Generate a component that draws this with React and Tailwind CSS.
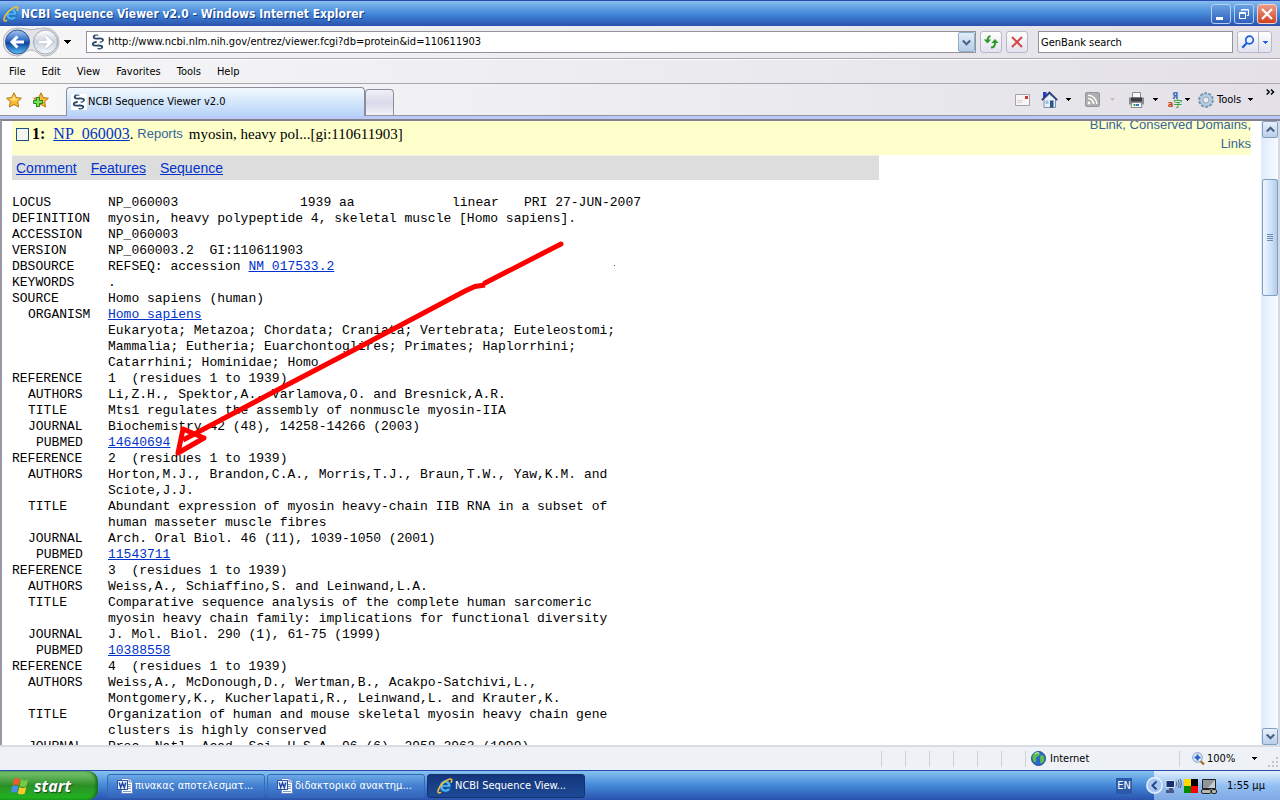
import React from 'react';

const LINK = 'text-[#0033cc] underline';

const menuItems = ['File', 'Edit', 'View', 'Favorites', 'Tools', 'Help'];

const record = [
  { label: 'DEFINITION', lines: ['myosin, heavy polypeptide 4, skeletal muscle [Homo sapiens].'] },
  { label: 'ACCESSION', lines: ['NP_060003'] },
  { label: 'VERSION', lines: ['NP_060003.2  GI:110611903'] },
  { label: 'DBSOURCE', lines: ['REFSEQ: accession '], link: 'NM_017533.2' },
  { label: 'KEYWORDS', lines: ['.'] },
  { label: 'SOURCE', lines: ['Homo sapiens (human)'] },
  { label: 'ORGANISM', indent: 'pl-4', lines: [''], link: 'Homo sapiens' },
  {
    label: '',
    lines: [
      'Eukaryota; Metazoa; Chordata; Craniata; Vertebrata; Euteleostomi;',
      'Mammalia; Eutheria; Euarchontoglires; Primates; Haplorrhini;',
      'Catarrhini; Hominidae; Homo.',
    ],
  },
];

const references = [
  {
    authors: ['Li,Z.H., Spektor,A., Varlamova,O. and Bresnick,A.R.'],
    title: ['Mts1 regulates the assembly of nonmuscle myosin-IIA'],
    journal: 'Biochemistry 42 (48), 14258-14266 (2003)',
    pubmed: '14640694',
  },
  {
    authors: ['Horton,M.J., Brandon,C.A., Morris,T.J., Braun,T.W., Yaw,K.M. and', 'Sciote,J.J.'],
    title: ['Abundant expression of myosin heavy-chain IIB RNA in a subset of', 'human masseter muscle fibres'],
    journal: 'Arch. Oral Biol. 46 (11), 1039-1050 (2001)',
    pubmed: '11543711',
  },
  {
    authors: ['Weiss,A., Schiaffino,S. and Leinwand,L.A.'],
    title: ['Comparative sequence analysis of the complete human sarcomeric', 'myosin heavy chain family: implications for functional diversity'],
    journal: 'J. Mol. Biol. 290 (1), 61-75 (1999)',
    pubmed: '10388558',
  },
  {
    authors: ['Weiss,A., McDonough,D., Wertman,B., Acakpo-Satchivi,L.,', 'Montgomery,K., Kucherlapati,R., Leinwand,L. and Krauter,K.'],
    title: ['Organization of human and mouse skeletal myosin heavy chain gene', 'clusters is highly conserved'],
    journal: 'Proc. Natl. Acad. Sci. U.S.A. 96 (6), 2958-2963 (1999)',
    pubmed: '10077619',
  },
];

const IeIcon = () => (
  <svg width="16" height="16" viewBox="0 0 16 16" fill="none" className="shrink-0">
    <path d="M8.300 2.500C5 2.500 2.900 5 2.900 8.200c0 3.400 2.200 5.700 5.500 5.700 2.500 0 4.300-1.200 5-3.400h-2.900c-.4.700-1.100 1-2 1-1.500 0-2.500-.8-2.600-2.400h7.800C13.900 5.200 12 2.500 8.300 2.500ZM6 6.900c.3-1.300 1.100-1.900 2.300-1.900s2 .6 2.200 1.900Z" fill="#4fb8f5" stroke="#1766b8" strokeWidth=".6" />
    <path d="M3.400 14.600C1.500 15.400.5 14.600 1.200 12 2.300 8 7.500 2.700 12 1.300c2.600-.8 3.300.6 2.300 2.800" stroke="#f2bd35" strokeWidth="1.600" strokeLinecap="round" />
  </svg>
);

const NcbiIcon = () => (
  <span className="flex size-4 shrink-0 items-center justify-center bg-white">
    <svg width="16" height="16" viewBox="0 0 16 16" fill="none" stroke="#2c4668" strokeLinecap="round">
      <path d="M4.500 1.500C2.500 3.500 4 4.800 7 4.600 10 4.400 12.500 3.800 13 6" strokeWidth="1.800" />
      <path d="M8 1.200C6.500.8 5.500.9 4.500 1.500M13 6c0 1.500-1.500 2-3 2.200" strokeWidth="1.100" />
      <path d="M6 8c-2 .3-3.500 1-3.200 2.600.5 1.400 3 1 5.200.9 3-.1 4.800.3 4.200 1.900" strokeWidth="1.800" />
      <path d="M12.200 13.400C11.500 14.800 9.500 15 8 14.700" strokeWidth="1.200" />
    </svg>
  </span>
);

const Triangle = ({ color = '#000' }) => (
  <svg width="5" height="3" viewBox="0 0 5 3" shapeRendering="crispEdges" className="shrink-0">
    <path d="M0 0h5v1H4v1H3v1H2V2H1V1H0Z" fill={color} />
  </svg>
);

const Chevron = ({ up }) => (
  <svg width="9" height="7" viewBox="0 0 9 7" fill="none" stroke="#4d6185" strokeWidth="2.200">
    <path d={up ? 'M.8 5.500 4.500 1.800 8.200 5.500' : 'M.8 1.500 4.500 5.200 8.200 1.500'} />
  </svg>
);

const WordIcon = () => (
  <svg width="16" height="16" viewBox="0 0 16 16" className="shrink-0">
    <path d="M4.500.5h8L15.500 3.500v12h-11Z" fill="#fff" stroke="#6a86bd" />
    <path d="M12 .5v3.500h3.500" fill="#d5e0f5" stroke="#6a86bd" />
    <path d="M11 6.500h3M11 8.500h3M6 13.500h8M11 10.500h3" stroke="#7d9ad0" />
    <rect x=".5" y="2.500" width="10" height="9" fill="#e8effc" stroke="#2a54a8" />
    <path d="m2.200 4.500 1.500 5 1.800-4.500 1.800 4.500 1.500-5" fill="none" stroke="#1e459b" strokeWidth="1.500" />
  </svg>
);

const TitleBar = () => (
  <header className="flex h-[26px] shrink-0 items-center border-t border-[#2b4aab] bg-linear-to-b from-[#86bdf0] via-[#4488d8] to-[#2a52ae] pr-[3px] pl-[3px]">
    <IeIcon />
    <h1 className="ml-[2px] flex-1 truncate font-['DejaVu_Sans_Condensed','Liberation_Sans',sans-serif] text-[12px] leading-4 font-bold text-white [text-shadow:1px_1px_0_#143a8c]">
      NCBI Sequence Viewer v2.0 - Windows Internet Explorer
    </h1>
    <div className="flex gap-[3px]">
      <button aria-label="Minimize" className="flex size-5 items-center justify-center rounded-[3px] border border-[#b5d0f2] bg-linear-to-b from-[#6ba1e2] to-[#2e5fbb]">
        <svg width="14" height="14" viewBox="0 0 14 14"><path d="M2 10h7v3H2Z" fill="#fff" /></svg>
      </button>
      <button aria-label="Restore" className="flex size-5 items-center justify-center rounded-[3px] border border-[#b5d0f2] bg-linear-to-b from-[#6ba1e2] to-[#2e5fbb]">
        <svg width="14" height="14" viewBox="0 0 14 14" fill="none" stroke="#fff">
          <path d="M4.500 4V2.500h7v6H10M4.500 3h7" />
          <path d="M2.500 5.500h6v6h-6ZM2.500 6.500h6" />
        </svg>
      </button>
      <button aria-label="Close" className="flex size-5 items-center justify-center rounded-[3px] border border-[#f2d0cc] bg-linear-to-b from-[#ec9a86] to-[#cf3f1c]">
        <svg width="14" height="14" viewBox="0 0 14 14"><path d="m2 2 10 10M12 2 2 12" stroke="#fff" strokeWidth="2.200" /></svg>
      </button>
    </div>
  </header>
);

const NavButtons = () => (
  <svg width="58" height="30" viewBox="0 0 58 30" fill="none">
    <defs>
      <linearGradient id="back" x1="0" y1="0" x2="0" y2="1">
        <stop offset="0" stopColor="#a8c8f0" />
        <stop offset=".4" stopColor="#3a72cc" />
        <stop offset=".55" stopColor="#0b479f" />
        <stop offset="1" stopColor="#5fc0fa" />
      </linearGradient>
      <linearGradient id="fwd" x1="0" y1="0" x2="0" y2="1">
        <stop offset="0" stopColor="#fff" />
        <stop offset=".5" stopColor="#ccd4df" />
        <stop offset="1" stopColor="#f4f9ff" />
      </linearGradient>
    </defs>
    <path d="M14 1c5 0 9 1.500 14 1.500S37 1 42 1a14 14 0 0 1 0 28c-6 0-8-6-14-6s-8 6-14 6a14 14 0 0 1 0-28Z" fill="#e2e3e7" stroke="#b2b4bb" />
    <circle cx="14.500" cy="15" r="12" fill="url(#back)" stroke="#33548c" />
    <circle cx="42.500" cy="15" r="12" fill="url(#fwd)" stroke="#a0a8b5" />
    <path d="M21 15H9.500M14.500 9.500 9 15l5.500 5.500" stroke="#fff" strokeWidth="3" />
    <path d="M36 15h11.500M42.500 9.500 48 15l-5.500 5.500" stroke="#a9b2bf" strokeWidth="4" />
    <path d="M36 15h11.500M42.500 9.500 48 15l-5.500 5.500" stroke="#fff" strokeWidth="3" />
  </svg>
);

const AddressRow = () => (
  <div className="flex h-[33px] shrink-0 items-center border-b border-[#a9a7b0] bg-linear-to-r from-[#f6f6f7] to-[#e3e1e7] pr-2 pl-[3px]">
    <button aria-label="Back and forward"><NavButtons /></button>
    <button aria-label="Recent pages" className="flex w-[25px] justify-center pr-3">
      <svg width="7" height="4" viewBox="0 0 7 4" shapeRendering="crispEdges"><path d="M0 0h7L3.500 4Z" /></svg>
    </button>
    <div className="flex h-[22px] flex-1 items-center border border-[#93929d] bg-white pl-[3px]">
      <NcbiIcon />
      <input
        aria-label="Address"
        defaultValue="http://www.ncbi.nlm.nih.gov/entrez/viewer.fcgi?db=protein&id=110611903"
        className="ml-[2px] min-w-0 flex-1 bg-transparent outline-none"
      />
      <button aria-label="Show addresses" className="flex h-5 w-[17px] items-center justify-center rounded-[2px] border border-[#8eadc8] bg-linear-to-b from-[#e2edf9] to-[#b4cde6]">
        <Chevron />
      </button>
    </div>
    <button aria-label="Refresh" className="ml-1 flex size-[22px] items-center justify-center rounded-[3px] border border-[#b9b8cb] bg-linear-to-b from-white to-[#e2e2ef]">
      <svg width="16" height="16" viewBox="0 0 16 16" fill="none" stroke="#2c9a28" strokeWidth="2">
        <path d="M7.500 2C5 2.500 4.500 4 4.500 7M8 13.500c3 0 4-1.500 4-4.500" />
        <path d="M.8 5.500h7.400L4.500 9.500ZM8.300 9h7.400L12 5Z" fill="#2c9a28" stroke="none" />
      </svg>
    </button>
    <button aria-label="Stop" className="ml-1 flex size-[22px] items-center justify-center rounded-[3px] border border-[#b9b8cb] bg-linear-to-b from-white to-[#e2e2ef]">
      <svg width="12" height="12" viewBox="0 0 12 12"><path d="m1 1 10 10M11 1 1 11" stroke="#d04a4a" strokeWidth="2" /></svg>
    </button>
    <input aria-label="Search" defaultValue="GenBank search" className="ml-[10px] h-[22px] w-[195px] border border-[#93929d] bg-white px-[2px] outline-none" />
    <div className="ml-1 flex h-[22px] rounded-[3px] border border-[#b9b8cb] bg-linear-to-b from-white to-[#e2e2ef]">
      <button aria-label="Search the web" className="flex w-[21px] items-center justify-center border-r border-[#b9b8cb]">
        <svg width="14" height="14" viewBox="0 0 14 14" fill="none" stroke="#1f5fe0">
          <circle cx="8.500" cy="5" r="3.800" strokeWidth="1.700" fill="#eef5ff" />
          <path d="m5.800 8-4.500 4.700" strokeWidth="2.300" />
        </svg>
      </button>
      <button aria-label="Search options" className="flex w-[12px] items-center justify-center"><Triangle color="#1f5fe0" /></button>
    </div>
  </div>
);

const MenuBar = () => (
  <nav className="flex h-[25px] shrink-0 items-center gap-4 border-t border-b border-t-white border-b-[#a9a7b0] bg-linear-to-r from-[#f6f6f7] to-[#e3e1e7] pl-[9px]">
    {menuItems.map((item) => (
      <button key={item}>{item}</button>
    ))}
  </nav>
);

const starPath = 'M8 .8 10.300 5.600 15.400 6.200 11.600 9.800 12.600 15 8 12.500 3.400 15 4.400 9.800.6 6.200 5.700 5.600Z';

const TabRow = () => (
  <div className="flex h-8 shrink-0 items-end border-b border-[#93929d] bg-linear-to-r from-[#f8f8f9] to-[#e3e1e7]">
    <div className="flex h-full w-[66px] items-center gap-[11px] pl-[6px]">
      <button aria-label="Favorites Center">
        <svg width="16" height="16" viewBox="0 0 16 16"><path d={starPath} fill="#fdb92c" stroke="#b57716" /><path d="M8 3 9.500 6.500 13 7 8 9 3 7 6.500 6.500Z" fill="#ffdf80" /></svg>
      </button>
      <button aria-label="Add to Favorites">
        <svg width="16" height="16" viewBox="0 0 16 16">
          <path d={starPath} fill="#fdb732" stroke="#b57716" />
          <path d="M3.500 5.500h3v3h3v3h-3v3h-3v-3h-3v-3h3Z" fill="#7ade55" stroke="#238420" />
        </svg>
      </button>
    </div>
    <button className="-mb-px flex h-[29px] w-[299px] items-center rounded-t-[4px] border border-b-0 border-[#8b8d9c] bg-linear-to-b from-[#f4f9fe] via-[#d3e6fb] to-[#b9d4f8] pl-[4px]">
      <NcbiIcon />
      <span className="ml-px">NCBI Sequence Viewer v2.0</span>
    </button>
    <button aria-label="New Tab" className="h-[26px] w-[29px] rounded-t-[4px] border border-b-0 border-[#8b8d9c] bg-linear-to-b from-[#f1f1f8] via-[#d9daea] to-[#f1f1f8]" />
    <div className="flex h-full flex-1 items-center justify-end">
      <button aria-label="Read mail" className="w-[26px]">
        <svg width="15" height="12" viewBox="0 0 15 12"><path d="M.5.5h14v11H.5Z" fill="#f7f5f5" stroke="#a7a3a5" /><path d="M2 6.500h6M2 8.500h5" stroke="#d5d1d4" /><path d="M10 2h3v3h-3Z" fill="#d33434" /></svg>
      </button>
      <button aria-label="Home" className="flex w-[44px] items-center gap-2">
        <svg width="17" height="17" viewBox="0 0 17 17">
          <path d="M2 1h3.500v6H2Z" fill="#2b3fc8" />
          <path d="M3 8 8.500 3 14.500 8v8.500H3Z" fill="#e9f0fa" stroke="#7b8ca8" />
          <path d="M.8 9.200 8.500 1.500l7.700 7.700" fill="none" stroke="#29427c" strokeWidth="1.800" />
          <path d="M9 9.500h3.500v7H9Z" fill="#24558c" />
          <path d="M4.500 9.500h3V13h-3Z" fill="#9cc0e0" />
        </svg>
        <Triangle />
      </button>
      <button aria-label="Feeds" className="flex w-[43px] items-center gap-[10px]">
        <svg width="15" height="15" viewBox="0 0 15 15" fill="none">
          <rect x=".5" y=".5" width="14" height="14" rx="1.500" fill="#aeaeae" stroke="#969696" />
          <circle cx="4" cy="11" r="1.400" fill="#fff" />
          <path d="M3 6.500A5.500 5.500 0 0 1 8.500 12M3 3.200A8.800 8.800 0 0 1 11.800 12" stroke="#fff" strokeWidth="1.500" />
        </svg>
        <Triangle color="#c6c5bc" />
      </button>
      <button aria-label="Print" className="flex w-[39px] items-center gap-2">
        <svg width="17" height="16" viewBox="0 0 17 16">
          <path d="M4.500.5h8v6h-8Z" fill="#fafafa" stroke="#8a8a8a" />
          <path d="M1 5.500h15v7H1Z" fill="#8a8b90" />
          <path d="M3 5.500h11v4H3Z" fill="#3c3d42" />
          <path d="M4 10.500h9l1 5H3Z" fill="#fff" stroke="#8a8a8a" />
          <path d="M5.500 12h2v2h-2Z" fill="#2d9a4f" />
          <path d="M8 12h3v2H8Z" fill="#2c79c8" />
        </svg>
        <Triangle />
      </button>
      <button aria-label="Language" className="flex w-[31px] items-center gap-[2px]">
        <span className="flex w-4 flex-col items-center text-[9px] leading-[8px] font-bold">
          <span className="text-[#4068c0]">Я</span>
          <span className="flex">
            <span className="text-[#c04018]">a</span>
            <span className="font-['Noto_Sans_CJK_JP',sans-serif] font-normal text-[#229a22]">字</span>
          </span>
        </span>
        <Triangle />
      </button>
      <button className="flex w-[66px] items-center">
        <svg width="16" height="16" viewBox="0 0 16 16" fill="none">
          <circle cx="8" cy="8" r="6.700" stroke="#7793ae" strokeWidth="2.200" strokeDasharray="2.900 1.310" />
          <circle cx="8" cy="8" r="5" stroke="#7793ae" strokeWidth="2.600" />
          <circle cx="8" cy="8" r="4.700" stroke="#b3cfe6" strokeWidth="2.600" />
          <circle cx="8" cy="8" r="3" fill="#eceaf0" stroke="#8299b0" strokeWidth=".8" />
        </svg>
        <span className="ml-[3px] flex-1 text-left">Tools</span>
        <span className="pr-[11px]"><Triangle /></span>
      </button>
      <button aria-label="More" className="mb-4 w-4 pl-[2px] text-left">
        <svg width="9" height="6" viewBox="0 0 9 6" fill="none" stroke="#000" strokeWidth="1.500"><path d="m.7.500 2.500 2.500L.7 5.500M5 .5 7.500 3 5 5.500" /></svg>
      </button>
    </div>
  </div>
);

const Field = ({ label, indent = '', children }) => (
  <div className="flex">
    <dt className={`w-24 shrink-0 ${indent}`}>{label}</dt>
    <dd>{children}</dd>
  </div>
);

const Lines = ({ lines }) => lines.map((line) => <div key={line}>{line}</div>);

const Record = () => (
  <dl className="pt-[15px] pl-[10px] font-['Liberation_Mono','Courier_New',monospace] text-[13px] leading-4 whitespace-pre">
    <Field label="LOCUS">
      <div className="flex">
        <span className="w-48">NP_060003</span>
        <span className="w-[152px]">1939 aa</span>
        <span className="w-[72px]">linear</span>
        <span>PRI 27-JUN-2007</span>
      </div>
    </Field>
    {record.map(({ label, indent, lines, link }) => (
      <Field key={label} label={label} indent={indent}>
        {link ? <>{lines[0]}<a href="#record" className={LINK}>{link}</a></> : <Lines lines={lines} />}
      </Field>
    ))}
    {references.map((ref, i) => (
      <React.Fragment key={ref.pubmed}>
        <Field label="REFERENCE">{`${i + 1}  (residues 1 to 1939)`}</Field>
        <Field label="AUTHORS" indent="pl-4"><Lines lines={ref.authors} /></Field>
        <Field label="TITLE" indent="pl-4"><Lines lines={ref.title} /></Field>
        <Field label="JOURNAL" indent="pl-4">{ref.journal}</Field>
        <Field label="PUBMED" indent="pl-6"><a href="#pubmed" className={LINK}>{ref.pubmed}</a></Field>
      </React.Fragment>
    ))}
  </dl>
);

// Hand-drawn red arrow that points at the first PubMed id
const ArrowMark = () => (
  <svg width="640" height="360" viewBox="0 0 640 360" fill="none" stroke="#f00" strokeWidth="5" className="pointer-events-none absolute top-0 left-0">
    <path d="M559 123 483 162" strokeLinecap="round" />
    <path d="M483 164 473 165.500 463 170 348 231 281 266 198 310 181 319" />
    <path d="M181 308 202 317 176 332Z" strokeWidth="5" strokeLinejoin="round" />
    <path d="M612 144h1v1h-1Z" fill="#833" stroke="none" />
  </svg>
);

const ScrollBar = () => (
  <div className="flex w-[19px] shrink-0 flex-col border-r-2 border-[#d3d9e6] bg-linear-to-r from-[#dfebfb] to-[#f8fbff]">
    <button aria-label="Scroll up" className="ml-px flex h-[17px] w-4 items-center justify-center rounded-[2px] border border-[#7f9fc0] bg-linear-to-b from-[#e8f1fb] to-[#b9cfe8]"><Chevron up /></button>
    <div className="mt-[41px] ml-px flex h-[117px] w-4 flex-col items-center justify-center gap-px rounded-[2px] border border-[#7f9fc0] bg-linear-to-r from-[#eef6ff] via-[#d3e5fa] to-[#b4cbe6]">
      <span className="h-px w-[6px] bg-[#6d8bb0]" />
      <span className="h-px w-[6px] bg-[#6d8bb0]" />
      <span className="h-px w-[6px] bg-[#6d8bb0]" />
      <span className="h-px w-[6px] bg-[#6d8bb0]" />
    </div>
    <div className="flex-1" />
    <button aria-label="Scroll down" className="ml-px flex h-[17px] w-4 items-center justify-center rounded-[2px] border border-[#7f9fc0] bg-linear-to-b from-[#e8f1fb] to-[#b9cfe8]"><Chevron /></button>
  </div>
);

const Page = () => (
  <main className="flex min-h-0 flex-1 border-t-2 border-l-2 border-t-[#84818c] border-l-[#9a98a3] bg-white">
    <div className="relative min-w-0 flex-1 overflow-hidden">
      <div className="mr-[10px] ml-[10px] flex h-[34px] items-end justify-between bg-[#ffffcc] font-['Liberation_Sans',Arial,sans-serif] text-[13px]">
        <div className="flex h-[26px] items-center self-start pl-1 font-['Liberation_Serif','Times_New_Roman',serif] text-[15px] whitespace-pre text-black">
          <input id="rec1" type="checkbox" className="size-[13px] appearance-none border border-[#1c5180] bg-[#f4f4f1]" />
          <label htmlFor="rec1" className="ml-[3px] text-[16px] font-bold">1:</label>
          <a href="#record" className={`ml-2 text-[16px] ${LINK}`}>NP_060003</a>
          <span>. </span>
          <a href="#reports" className="font-['Liberation_Sans',Arial,sans-serif] text-[13px] text-[#336699]">Reports</a>
          <span className="ml-[6px]">myosin, heavy pol...[gi:110611903]</span>
        </div>
        <div className="pb-[2px] text-right leading-[19px] text-[#336699]">
          <a href="#blink">BLink</a>, <a href="#domains">Conserved Domains</a>,<br />
          <a href="#links">Links</a>
        </div>
      </div>
      <div className="ml-[10px] flex h-[25px] w-[867px] items-center gap-[14px] border-t border-[#eeeeee] bg-[#dddddd] pl-1 font-['Liberation_Sans',Arial,sans-serif] text-[14px]">
        <a href="#comment" className={LINK}>Comment</a>
        <a href="#features" className={LINK}>Features</a>
        <a href="#sequence" className={LINK}>Sequence</a>
      </div>
      <Record />
      <ArrowMark />
    </div>
    <ScrollBar />
  </main>
);

const StatusBar = () => (
  <footer className="flex h-[25px] shrink-0 items-center justify-end border-t-2 border-[#d9dce2] bg-[#eef2f7]">
    <span className="h-4 w-6 border-l border-[#ced2d9]" />
    <span className="h-4 w-6 border-l border-[#ced2d9]" />
    <span className="h-4 w-6 border-l border-[#ced2d9]" />
    <span className="h-4 w-6 border-l border-[#ced2d9]" />
    <span className="h-4 w-6 border-l border-[#ced2d9]" />
    <span className="h-4 w-6 border-l border-[#ced2d9]" />
    <div className="flex h-4 w-[154px] items-center gap-1 border-l border-[#ced2d9] pl-[5px]">
      <svg width="15" height="15" viewBox="0 0 15 15">
        <circle cx="7.500" cy="7.500" r="7" fill="#2b68c8" stroke="#28508f" />
        <path d="M3 2.500C6 .5 9 1 9 3 8 6 5 5 5 8c1 2-1 4-2 3C1 8 .8 5 3 2.500ZM10 4c3 0 4 3 3 6-2 3-4 3-4 1 1-2-1-5 1-7Z" fill="#5cc04a" />
        <path d="M4 3c1.500-1.500 3-1.500 4-1" stroke="#d7f0ff" fill="none" />
      </svg>
      <span>Internet</span>
    </div>
    <button className="flex h-4 w-[88px] items-center border-l border-[#ced2d9] pl-3">
      <svg width="14" height="14" viewBox="0 0 14 14" fill="none">
        <path d="m8 8.500 4 4" stroke="#a8702e" strokeWidth="2.400" />
        <circle cx="5.500" cy="5.500" r="4.800" fill="#e4f0ff" stroke="#7f98ba" />
        <path d="M5.500 2.500v6M2.500 5.500h6" stroke="#1a58c4" strokeWidth="2" />
      </svg>
      <span className="ml-px flex-1 text-left">100%</span>
      <span className="pr-[10px]"><Triangle /></span>
    </button>
    <svg width="13" height="20" viewBox="0 0 13 20" fill="#c3c6cd">
      <path d="M9 8h2v2H9ZM5 12h2v2H5ZM9 12h2v2H9ZM1 16h2v2H1ZM5 16h2v2H5ZM9 16h2v2H9Z" />
    </svg>
  </footer>
);

const TaskButton = ({ icon, children, active }) => (
  <button
    className={`flex h-6 w-[158px] items-center gap-[2px] rounded-[3px] border px-[9px] text-white ${
      active ? 'border-[#15306f] bg-linear-to-b from-[#14357c] to-[#1d4a96]' : 'border-[#3768b8] bg-linear-to-b from-[#6ba9e6] via-[#437fd0] to-[#3566bd]'
    }`}
  >
    {icon}
    <span className="whitespace-nowrap">{children}</span>
  </button>
);

const TaskBar = () => (
  <div className="flex h-[30px] shrink-0 items-center border-t border-[#2b4aab] bg-linear-to-b from-[#86c2f0] via-[#4488d8] to-[#2a52ae]">
    <button className="flex h-full w-[98px] items-center gap-1 rounded-r-[10px] bg-linear-to-b from-[#7cc873] via-[#2a9026] to-[#1cb81c] pl-[10px] shadow-[inset_-2px_0_3px_#1c6a20]">
      <svg width="20" height="20" viewBox="0 0 20 20">
        <path d="M4 3c2-1.300 4-1.200 6 0L8.500 9.500c-2-1.200-4-1.300-6 0Z" fill="#f0592a" />
        <path d="M11 3.500c2 1.200 4.500 1.200 7 0l-1.600 6.500c-2.400 1.200-4.700 1.100-6.800 0Z" fill="#7bc943" />
        <path d="M2.200 10.500c2-1.300 4-1.200 6 0L6.700 17c-2-1.200-4-1.300-6 0Z" fill="#4a8df0" />
        <path d="M9.300 11c2 1.200 4.500 1.200 7 0l-1.600 6.500c-2.400 1.200-4.700 1.100-6.800 0Z" fill="#fbc92d" />
      </svg>
      <span className="font-['Open_Sans','Liberation_Sans',sans-serif] text-[16px] leading-5 font-bold text-white italic [text-shadow:1px_1px_1px_#1d4a1d]">start</span>
    </button>
    <div className="ml-[9px] flex flex-1 gap-[2px]">
      <TaskButton icon={<WordIcon />}>πινακας αποτελεσματ...</TaskButton>
      <TaskButton icon={<WordIcon />}>διδακτορικό ανακτημ...</TaskButton>
      <TaskButton icon={<IeIcon />} active>NCBI Sequence View...</TaskButton>
    </div>
    <button className="mr-[22px] h-4 bg-[#2c5aa8] px-px text-white">EN</button>
    <div className="flex h-full w-[126px] items-center bg-linear-to-b from-[#e2effc] via-[#93c0f2] to-[#7fa9e4]">
      <button aria-label="Show hidden icons" className="-ml-2 shrink-0">
        <svg width="17" height="17" viewBox="0 0 17 17" fill="none">
          <circle cx="8.500" cy="8.500" r="7.700" fill="#a9c8f0" stroke="#eaf3ff" strokeWidth="1.400" />
          <path d="M10.500 4.500 6.500 8.500l4 4" stroke="#23478c" strokeWidth="2" />
        </svg>
      </button>
      <svg width="17" height="16" viewBox="0 0 17 16" fill="none" className="ml-[2px] shrink-0">
        <path d="M1 2.500h8.500v7H1Z" fill="#17306e" stroke="#dbe4f2" />
        <path d="M4 10h4v2H4ZM1 12h8v3H1Z" fill="#4d5a88" />
        <path d="M11 3.500c1 1.500 1 3 0 4.500M13 2c1.500 2.500 1.500 5 0 7.500M15 1c1.800 3 1.800 6 0 9" stroke="#4c5a76" />
      </svg>
      <svg width="14" height="14" viewBox="0 0 14 14" className="ml-[2px] shrink-0">
        <path d="M0 0h7v7H0Z" fill="#ffd800" />
        <path d="M7 0h7v7H7Z" fill="#000" />
        <path d="M0 7h7v7H0Z" fill="#008a00" />
        <path d="M7 7h7v7H7Z" fill="#f00" />
      </svg>
      <svg width="16" height="16" viewBox="0 0 16 16" className="ml-[3px] shrink-0">
        <path d="M1.500 1.500h13v9h-13Z" fill="#90959a" stroke="#222" />
        <path d="m7 10 7-8v8Z" fill="#c9ccd0" />
        <rect x=".5" y="11.500" width="9.500" height="4" rx="1.500" fill="#b9b9a9" stroke="#222" />
        <rect x="10.500" y="11.500" width="5" height="4" rx="1.500" fill="#b9b9a9" stroke="#222" />
      </svg>
      <span className="ml-[10px] whitespace-nowrap text-black">1:55 μμ</span>
    </div>
  </div>
);

const App = () => (
  <div className="flex h-screen flex-col overflow-hidden bg-[#ece9d8] font-['DejaVu_Sans_Condensed','Liberation_Sans',sans-serif] text-[11px] leading-[14px] text-black">
    <TitleBar />
    <AddressRow />
    <MenuBar />
    <TabRow />
    <div className="h-[3px] shrink-0 bg-[#b9c9f8]" />
    <Page />
    <StatusBar />
    <TaskBar />
  </div>
);

export default App;
